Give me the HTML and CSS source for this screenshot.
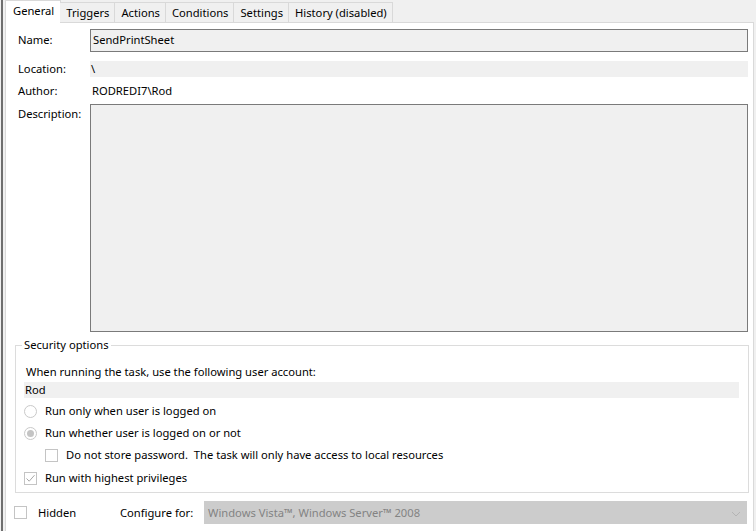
FILE: index.html
```html
<!DOCTYPE html>
<html>
<head>
<meta charset="utf-8">
<link rel="stylesheet" href="styles.css">
</head>
<body>
<div class="win">
  <div class="tabs">
    <div class="tab sel">General</div>
    <div class="tab">Triggers</div>
    <div class="tab">Actions</div>
    <div class="tab">Conditions</div>
    <div class="tab">Settings</div>
    <div class="tab">History (disabled)</div>
  </div>
  <div class="panel">
    <div class="form">
      <div class="lbl lbl-name">Name:</div>
      <div class="tb name">SendPrintSheet</div>
      <div class="lbl lbl-loc">Location:</div>
      <div class="ro loc">\</div>
      <div class="lbl lbl-author">Author:</div>
      <div class="author">RODREDI7\Rod</div>
      <div class="lbl lbl-desc">Description:</div>
      <div class="tb desc"></div>
    </div>
    <fieldset class="sec">
      <legend>Security options</legend>
      <div class="when">When running the task, use the following user account:</div>
      <div class="ro user">Rod</div>
      <div class="opt r1"><span class="radio"></span>Run only when user is logged on</div>
      <div class="opt r2"><span class="radio on"></span>Run whether user is logged on or not</div>
      <div class="opt sub"><span class="check"></span>Do not store password.&nbsp; The task will only have access to local resources</div>
      <div class="opt hi"><span class="check on"><svg viewBox="0 0 13 13" width="13" height="13"><path d="M2.5 6.5 L5.2 9.2 L10.5 3.2" fill="none" stroke="#a8a8a8" stroke-width="1"/></svg></span>Run with highest privileges</div>
    </fieldset>
    <div class="bottom">
      <span class="check hidden-cb"></span>
      <span class="hidden-lbl">Hidden</span>
      <span class="cfg-lbl">Configure for:</span>
      <div class="combo">
        <span>Windows Vista™, Windows Server™ 2008</span>
        <svg class="chev" viewBox="0 0 10 6" width="10" height="6"><path d="M1 1 L5 5 L9 1" fill="none" stroke="#b4b4b4" stroke-width="1"/></svg>
      </div>
    </div>
  </div>
</div>
</body>
</html>
```
FILE: styles.css
```css
html, body {
  margin: 0;
  padding: 0;
  background: #f0f0f0;
  width: 756px;
  height: 531px;
  overflow: hidden;
  font-family: "Noto Sans", "Open Sans", sans-serif;
  font-size: 11.2px;
  color: #000;
}
.win {
  height: 531px;
  border-left: 2px solid #6e6e6e;
  margin-left: 1px;
  padding-left: 2px;
  box-sizing: border-box;
}
.tabs {
  display: flex;
  height: 22px;
  align-items: flex-end;
  padding-left: 2px;
  position: relative;
  z-index: 2;
}
.tab {
  height: 20px;
  box-sizing: border-box;
  border: 1px solid #d9d9d9;
  border-left: none;
  border-bottom: none;
  background: #f0f0f0;
  padding: 0 5px 0 6px;
  line-height: 20px;
  white-space: nowrap;
}
.tab.sel {
  height: 23px;
  margin-bottom: -1px;
  border-left: 1px solid #d9d9d9;
  background: #fff;
  padding: 0 6px 0 7px;
  line-height: 20px;
  margin-left: -2px;
  margin-right: -1px;
}
.panel {
  background: #fff;
  border: 1px solid #d9d9d9;
  width: 749px;
  height: 515px;
  box-sizing: border-box;
  position: relative;
  z-index: 1;
}
.form {
  display: grid;
  grid-template-columns: 72px 658px;
  padding: 6px 0 0 12px;
}
.lbl-name { line-height: 22px; }
.tb {
  background: #f0f0f0;
  border: 1px solid #7a7a7a;
  box-sizing: border-box;
  padding: 0 2px;
  line-height: 20px;
}
.name { height: 23px; }
.ro {
  background: #f0f0f0;
  line-height: 16px;
  height: 16px;
  padding: 0 1px;
}
.lbl-loc, .loc { margin-top: 9px; line-height: 16px; }
.lbl-author, .author { margin-top: 6px; line-height: 16px; }
.author { padding-left: 2px; }
.lbl-desc { margin-top: 5px; line-height: 18px; padding-top: 1px; }
.desc { margin-top: 5px; height: 228px; }
.sec {
  margin: 5px 0 0 9px;
  width: 733px;
  box-sizing: border-box;
  border: 1px solid #dcdcdc;
  padding: 13px 9px 6px 8px;
  height: 156px;
}
.sec legend {
  padding: 0 2px;
  margin-left: -2px;
  line-height: 16px;
}
.when {
  line-height: 16px;
  padding-left: 2px;
  margin-top: -2px;
}
.user {
  margin-top: 2px;
  width: 715px;
  box-sizing: border-box;
  padding-left: 1px;
}
.opt {
  display: flex;
  align-items: center;
  line-height: 16px;
  height: 16px;
  white-space: nowrap;
}
.opt .radio, .opt .check { margin-right: 8px; flex: none; }
.r1 { margin-top: 5px; }
.r2 { margin-top: 6px; }
.sub { margin-top: 6px; padding-left: 21px; }
.hi { margin-top: 7px; }
.radio {
  width: 13px;
  height: 13px;
  border: 1px solid #c9c9c9;
  border-radius: 50%;
  box-sizing: border-box;
  display: inline-flex;
  align-items: center;
  justify-content: center;
  background: #fff;
}
.radio.on::after {
  content: "";
  width: 7px;
  height: 7px;
  border-radius: 50%;
  background: #c4c4c4;
}
.check {
  width: 13px;
  height: 13px;
  border: 1px solid #c4c4c4;
  box-sizing: border-box;
  background: #fff;
  display: inline-block;
  position: relative;
}
.check svg {
  position: absolute;
  left: -1px;
  top: -1px;
}
.bottom {
  display: flex;
  align-items: center;
  margin-top: 8px;
  padding-left: 8px;
  height: 23px;
  white-space: nowrap;
}
.hidden-cb { flex: none; }
.hidden-lbl { margin-left: 11px; width: 82px; }
.cfg-lbl { width: 84px; }
.combo {
  width: 543px;
  height: 23px;
  background: #cccccc;
  color: #838383;
  display: flex;
  align-items: center;
  justify-content: space-between;
  padding: 0 6px 0 4px;
  box-sizing: border-box;
  flex: none;
}
.chev { margin-top: 2px; }
```
